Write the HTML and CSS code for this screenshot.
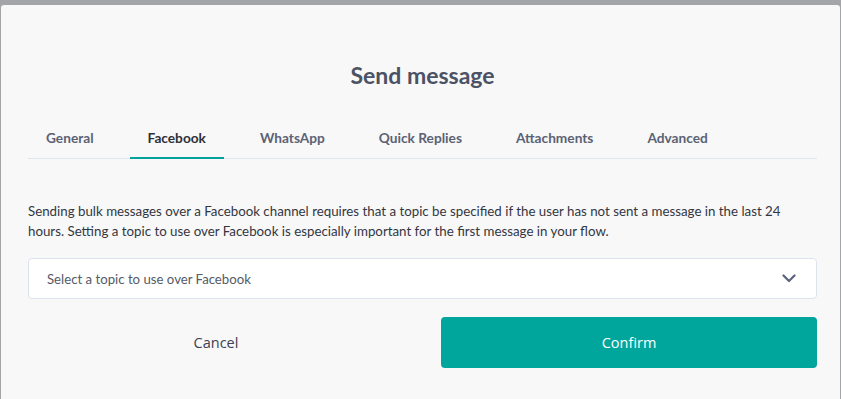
FILE: index.html
```html
<!DOCTYPE html>
<html lang="en">
<head>
    <meta charset="UTF-8">
    <title>Send message</title>
    <link rel="stylesheet" href="styles.css">
</head>
<body>
    <div class="modal">
        <h2 class="modal-title">Send message</h2>
        <div class="tabs">
            <div class="tab">General</div>
            <div class="tab active">Facebook</div>
            <div class="tab">WhatsApp</div>
            <div class="tab">Quick Replies</div>
            <div class="tab">Attachments</div>
            <div class="tab">Advanced</div>
        </div>
        <p class="note">Sending bulk messages over a Facebook channel requires that a topic be specified if the user has not sent a message in the last 24 hours. Setting a topic to use over Facebook is especially important for the first message in your flow.</p>
        <div class="select">
            <span>Select a topic to use over Facebook</span>
            <svg class="chevron" width="14" height="9" viewBox="0 0 14 9">
                <path d="M1.5 1.5 L7 7 L12.5 1.5" fill="none" stroke="#5b6378" stroke-width="2.2" stroke-linecap="round" stroke-linejoin="round"/>
            </svg>
        </div>
        <div class="actions">
            <button class="cancel-btn">Cancel</button>
            <button class="confirm-btn">Confirm</button>
        </div>
    </div>
</body>
</html>
```

FILE: styles.css
```css
body {
    margin: 0;
    background: #a4a5a9;
    font-family: Lato, 'Open Sans', Arial, sans-serif;
    height: 399px;
    overflow: hidden;
}
.modal {
    margin: 5px 0 0 1px;
    width: 839px;
    height: 400px;
    box-sizing: border-box;
    background: #f8f8f8;
    border-radius: 3px 3px 0 0;
    padding: 54px 23px 0 27px;
}
.modal-title {
    margin: 0;
    text-align: center;
    font-size: 23px;
    font-weight: 700;
    color: #4b5264;
    line-height: 32px;
}
.tabs {
    display: flex;
    gap: 18px;
    margin-top: 29px;
    border-bottom: 1px solid #dfe6ef;
}
.tab {
    padding: 0 18px 1px 18px;
    font-size: 13.7px;
    font-weight: 700;
    color: #5b6275;
    line-height: 36px;
    border-bottom: 2px solid transparent;
    margin-bottom: -1px;
}
.tab.active {
    color: #2e3038;
    border-bottom-color: #00a49a;
}
.note {
    margin: 42px 0 0 0;
    padding-right: 24px;
    font-size: 13.3px;
    line-height: 20px;
    color: #333641;
}
.select {
    margin-top: 17px;
    height: 41px;
    box-sizing: border-box;
    background: #fff;
    border: 1px solid #dde3ec;
    border-radius: 4px;
    padding: 0 20px 0 18px;
    display: flex;
    align-items: center;
    justify-content: space-between;
    font-size: 13.2px;
    color: #555a66;
}
.chevron {
    display: block;
}
.actions {
    margin-top: 18px;
    display: grid;
    grid-template-columns: 1fr 1fr;
    gap: 37px;
}
.actions button {
    height: 51px;
    border: none;
    border-radius: 4px;
    font-family: 'Open Sans', 'Noto Sans', Arial, sans-serif;
    font-size: 14.5px;
    cursor: pointer;
}
.cancel-btn {
    background: transparent;
    color: #3d4150;
}
.confirm-btn {
    background: #00a59b;
    color: #fff;
}
```
